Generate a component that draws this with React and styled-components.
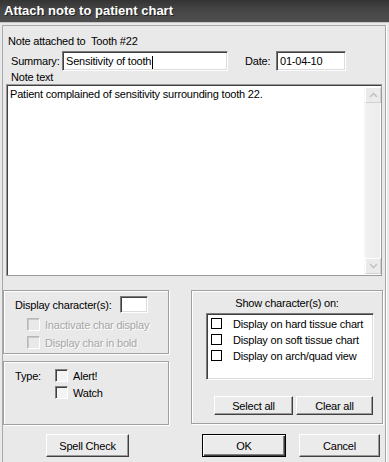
import React from "react";
import styled, { createGlobalStyle } from "styled-components";

const Global = createGlobalStyle`
  html, body { margin: 0; padding: 0; background: #e9e9e9; }
  * { box-sizing: border-box; }
`;

const Window = styled.div`
  width: 389px;
  height: 462px;
  background: #e9e9e9;
  display: flex;
  flex-direction: column;
  overflow: hidden;
  font-family: "Liberation Sans", Arial, sans-serif;
  font-size: 11px;
  letter-spacing: -0.2px;
  color: #000;
`;

const TitleBar = styled.div`
  height: 23px;
  flex: none;
  padding-left: 4px;
  line-height: 22px;
  background: linear-gradient(#333 0%, #444 40%, #4f4f4f 100%);
  border-bottom: 1px solid #c4c4c4;
  color: #fff;
  font-weight: bold;
  font-size: 13px;
  letter-spacing: 0;
  text-shadow: 1px 1px 0 #222;
`;

const Frame = styled.div`
  flex: 1;
  margin: 2px 3px 0 2px;
  border: 1px solid #a8a8a8;
  border-bottom: none;
  box-shadow: 1px 0 0 #fff;
  padding: 8px 2px 0 0;
  display: flex;
  flex-direction: column;
`;

const Line = styled.div`
  height: 14px;
  line-height: 14px;
  margin-left: ${(p) => p.$indent || 5}px;
  margin-top: ${(p) => p.$top || 0}px;
  white-space: pre;
`;

const Row = styled.div`
  display: flex;
  align-items: center;
  height: 20px;
  margin-top: 3px;
  padding-left: 8px;
`;

const Label = styled.span`
  width: ${(p) => p.$w}px;
  flex: none;
  margin-left: ${(p) => p.$ml || 0}px;
  white-space: nowrap;
`;

const Field = styled.div`
  width: ${(p) => p.$w}px;
  height: ${(p) => p.$h || 20}px;
  flex: none;
  background: #fff;
  border-top: 1px solid #7a7a7a;
  border-left: 1px solid #7a7a7a;
  border-right: 1px solid #fff;
  border-bottom: 1px solid #fff;
  box-shadow: inset 1px 1px 0 #404040, inset -1px -1px 0 #dcdcdc;
  padding: 0 3px;
  line-height: ${(p) => (p.$h || 20) - 2}px;
  white-space: nowrap;
`;

const Caret = styled.span`
  display: inline-block;
  width: 1px;
  height: 13px;
  background: #000;
  vertical-align: middle;
  margin-left: 1px;
`;

const NoteArea = styled.div`
  margin: 0 0 0 3px;
  width: 376px;
  height: 192px;
  flex: none;
  background: #fff;
  border: 1px solid #9a9a9a;
  box-shadow: inset 1px 1px 0 #404040;
  display: flex;
`;

const NoteText = styled.div`
  flex: 1;
  padding: 2px 3px;
  line-height: 14px;
`;

const ScrollBar = styled.div`
  width: 16px;
  margin: 2px 1px 1px 0;
  background: linear-gradient(90deg, #f2f2f2, #ececec);
  border-left: 1px solid #f8f8f8;
  display: flex;
  flex-direction: column;
  justify-content: space-between;
`;

const ScrollBtn = styled.div`
  width: 16px;
  height: 16px;
  background: #ebebeb;
  border: 1px solid #fff;
  border-right-color: #d0d0d0;
  border-bottom-color: #d0d0d0;
  display: flex;
  align-items: center;
  justify-content: center;
`;

const Lower = styled.div`
  display: grid;
  grid-template-columns: 166px 192px;
  column-gap: 22px;
  margin-top: 14px;
`;

const LeftCol = styled.div`
  display: flex;
  flex-direction: column;
  gap: 7px;
`;

const GroupBox = styled.div`
  border: 1px solid #a0a0a0;
  box-shadow: inset 1px 1px 0 #fff, 1px 1px 0 #fff;
  height: ${(p) => p.$h}px;
  padding: ${(p) => p.$pad || "0"};
`;

const DispRow = styled.div`
  display: flex;
  align-items: center;
  height: 17px;
  padding-left: 11px;
`;

const CheckRow = styled.div`
  display: flex;
  align-items: center;
  height: 13px;
  margin-top: ${(p) => p.$top || 0}px;
  padding-left: ${(p) => p.$pl || 0}px;
  gap: ${(p) => p.$gap || 5}px;
  color: ${(p) => (p.$disabled ? "#a6a6a6" : "#000")};
  text-shadow: ${(p) => (p.$disabled ? "1px 1px 0 #fff" : "none")};
  white-space: nowrap;
`;

const Check = styled.span`
  width: 13px;
  height: 13px;
  flex: none;
  background: ${(p) => (p.$disabled ? "#e9e9e9" : "#f4f4f4")};
  border-top: 1px solid ${(p) => (p.$disabled ? "#b8b8b8" : "#808080")};
  border-left: 1px solid ${(p) => (p.$disabled ? "#b8b8b8" : "#808080")};
  border-right: 1px solid #fff;
  border-bottom: 1px solid #fff;
  box-shadow: inset 1px 1px 0 ${(p) => (p.$disabled ? "#c8c8c8" : "#404040")};
`;

const TypeGrid = styled.div`
  display: grid;
  grid-template-columns: 40px auto;
  row-gap: 4px;
  padding: 7px 0 0 11px;
  align-items: center;
`;

const Centered = styled.div`
  text-align: center;
  height: 14px;
  line-height: 14px;
  margin-top: 5px;
`;

const ListBox = styled.div`
  margin: 3px 0 0 14px;
  width: 168px;
  height: 67px;
  background: #fff;
  border-top: 1px solid #7a7a7a;
  border-left: 1px solid #7a7a7a;
  border-right: 1px solid #fff;
  border-bottom: 1px solid #fff;
  box-shadow: inset 1px 1px 0 #404040, inset -1px -1px 0 #dcdcdc;
  padding: 4px 0 0 4px;
  display: flex;
  flex-direction: column;
  gap: 5px;
`;

const ListItem = styled.div`
  display: flex;
  align-items: center;
  height: 11px;
  gap: 11px;
  white-space: nowrap;
`;

const Box = styled.span`
  width: 11px;
  height: 11px;
  flex: none;
  border: 1px solid #000;
  background: #fff;
`;

const BtnRow = styled.div`
  display: flex;
  gap: 3px;
  margin: 16px 0 0 22px;
`;

const Button = styled.div`
  width: ${(p) => p.$w}px;
  height: ${(p) => p.$h || 23}px;
  margin-left: ${(p) => p.$ml || 0}px;
  flex: none;
  display: flex;
  align-items: center;
  justify-content: center;
  background: #ebebeb;
  border: 1px solid;
  border-color: ${(p) => (p.$default ? "#000" : "#fff #404040 #404040 #fff")};
  box-shadow: ${(p) =>
    p.$default
      ? "inset 1px 1px 0 #fff, inset -1px -1px 0 #404040, inset -2px -2px 0 #808080"
      : "inset -1px -1px 0 #9a9a9a"};
`;

const Bottom = styled.div`
  display: flex;
  margin-top: 9px;
`;

const Arrow = ({ up }) => (
  <svg width="9" height="6" viewBox="0 0 9 6">
    <path
      d={up ? "M1 5 L4.5 1.5 L8 5" : "M1 1 L4.5 4.5 L8 1"}
      fill="none"
      stroke="#c4c4c4"
      strokeWidth="1.6"
    />
  </svg>
);

export default function App() {
  return (
    <>
      <Global />
      <Window>
        <TitleBar>Attach note to patient chart</TitleBar>
        <Frame>
          <Line>{"Note attached to  Tooth #22"}</Line>
          <Row>
            <Label $w={51}>Summary:</Label>
            <Field $w={166}>
              Sensitivity of tooth
              <Caret />
            </Field>
            <Label $w={31} $ml={17}>Date:</Label>
            <Field $w={70}>01-04-10</Field>
          </Row>
          <Line $indent={8} $top={-1}>Note text</Line>
          <NoteArea>
            <NoteText>Patient complained of sensitivity surrounding tooth 22.</NoteText>
            <ScrollBar>
              <ScrollBtn>
                <Arrow up />
              </ScrollBtn>
              <ScrollBtn>
                <Arrow />
              </ScrollBtn>
            </ScrollBar>
          </NoteArea>
          <Lower>
            <LeftCol>
              <GroupBox $h={64} $pad="5px 0 0 0">
                <DispRow>
                  <Label $w={105}>Display character(s):</Label>
                  <Field $w={28} $h={17} />
                </DispRow>
                <CheckRow $disabled $pl={23} $top={5}>
                  <Check $disabled />
                  Inactivate char display
                </CheckRow>
                <CheckRow $disabled $pl={23} $top={5}>
                  <Check $disabled />
                  Display char in bold
                </CheckRow>
              </GroupBox>
              <GroupBox $h={64}>
                <TypeGrid>
                  <span>Type:</span>
                  <CheckRow>
                    <Check />
                    Alert!
                  </CheckRow>
                  <span />
                  <CheckRow>
                    <Check />
                    Watch
                  </CheckRow>
                </TypeGrid>
              </GroupBox>
            </LeftCol>
            <GroupBox $h={134}>
              <Centered>Show character(s) on:</Centered>
              <ListBox>
                <ListItem>
                  <Box />
                  Display on hard tissue chart
                </ListItem>
                <ListItem>
                  <Box />
                  Display on soft tissue chart
                </ListItem>
                <ListItem>
                  <Box />
                  Display on arch/quad view
                </ListItem>
              </ListBox>
              <BtnRow>
                <Button $w={79} $h={19}>Select all</Button>
                <Button $w={77} $h={19}>Clear all</Button>
              </BtnRow>
            </GroupBox>
          </Lower>
          <Bottom>
            <Button $w={83} $ml={43}>Spell Check</Button>
            <Button $w={84} $ml={73} $default>OK</Button>
            <Button $w={81} $ml={13}>Cancel</Button>
          </Bottom>
        </Frame>
      </Window>
    </>
  );
}
